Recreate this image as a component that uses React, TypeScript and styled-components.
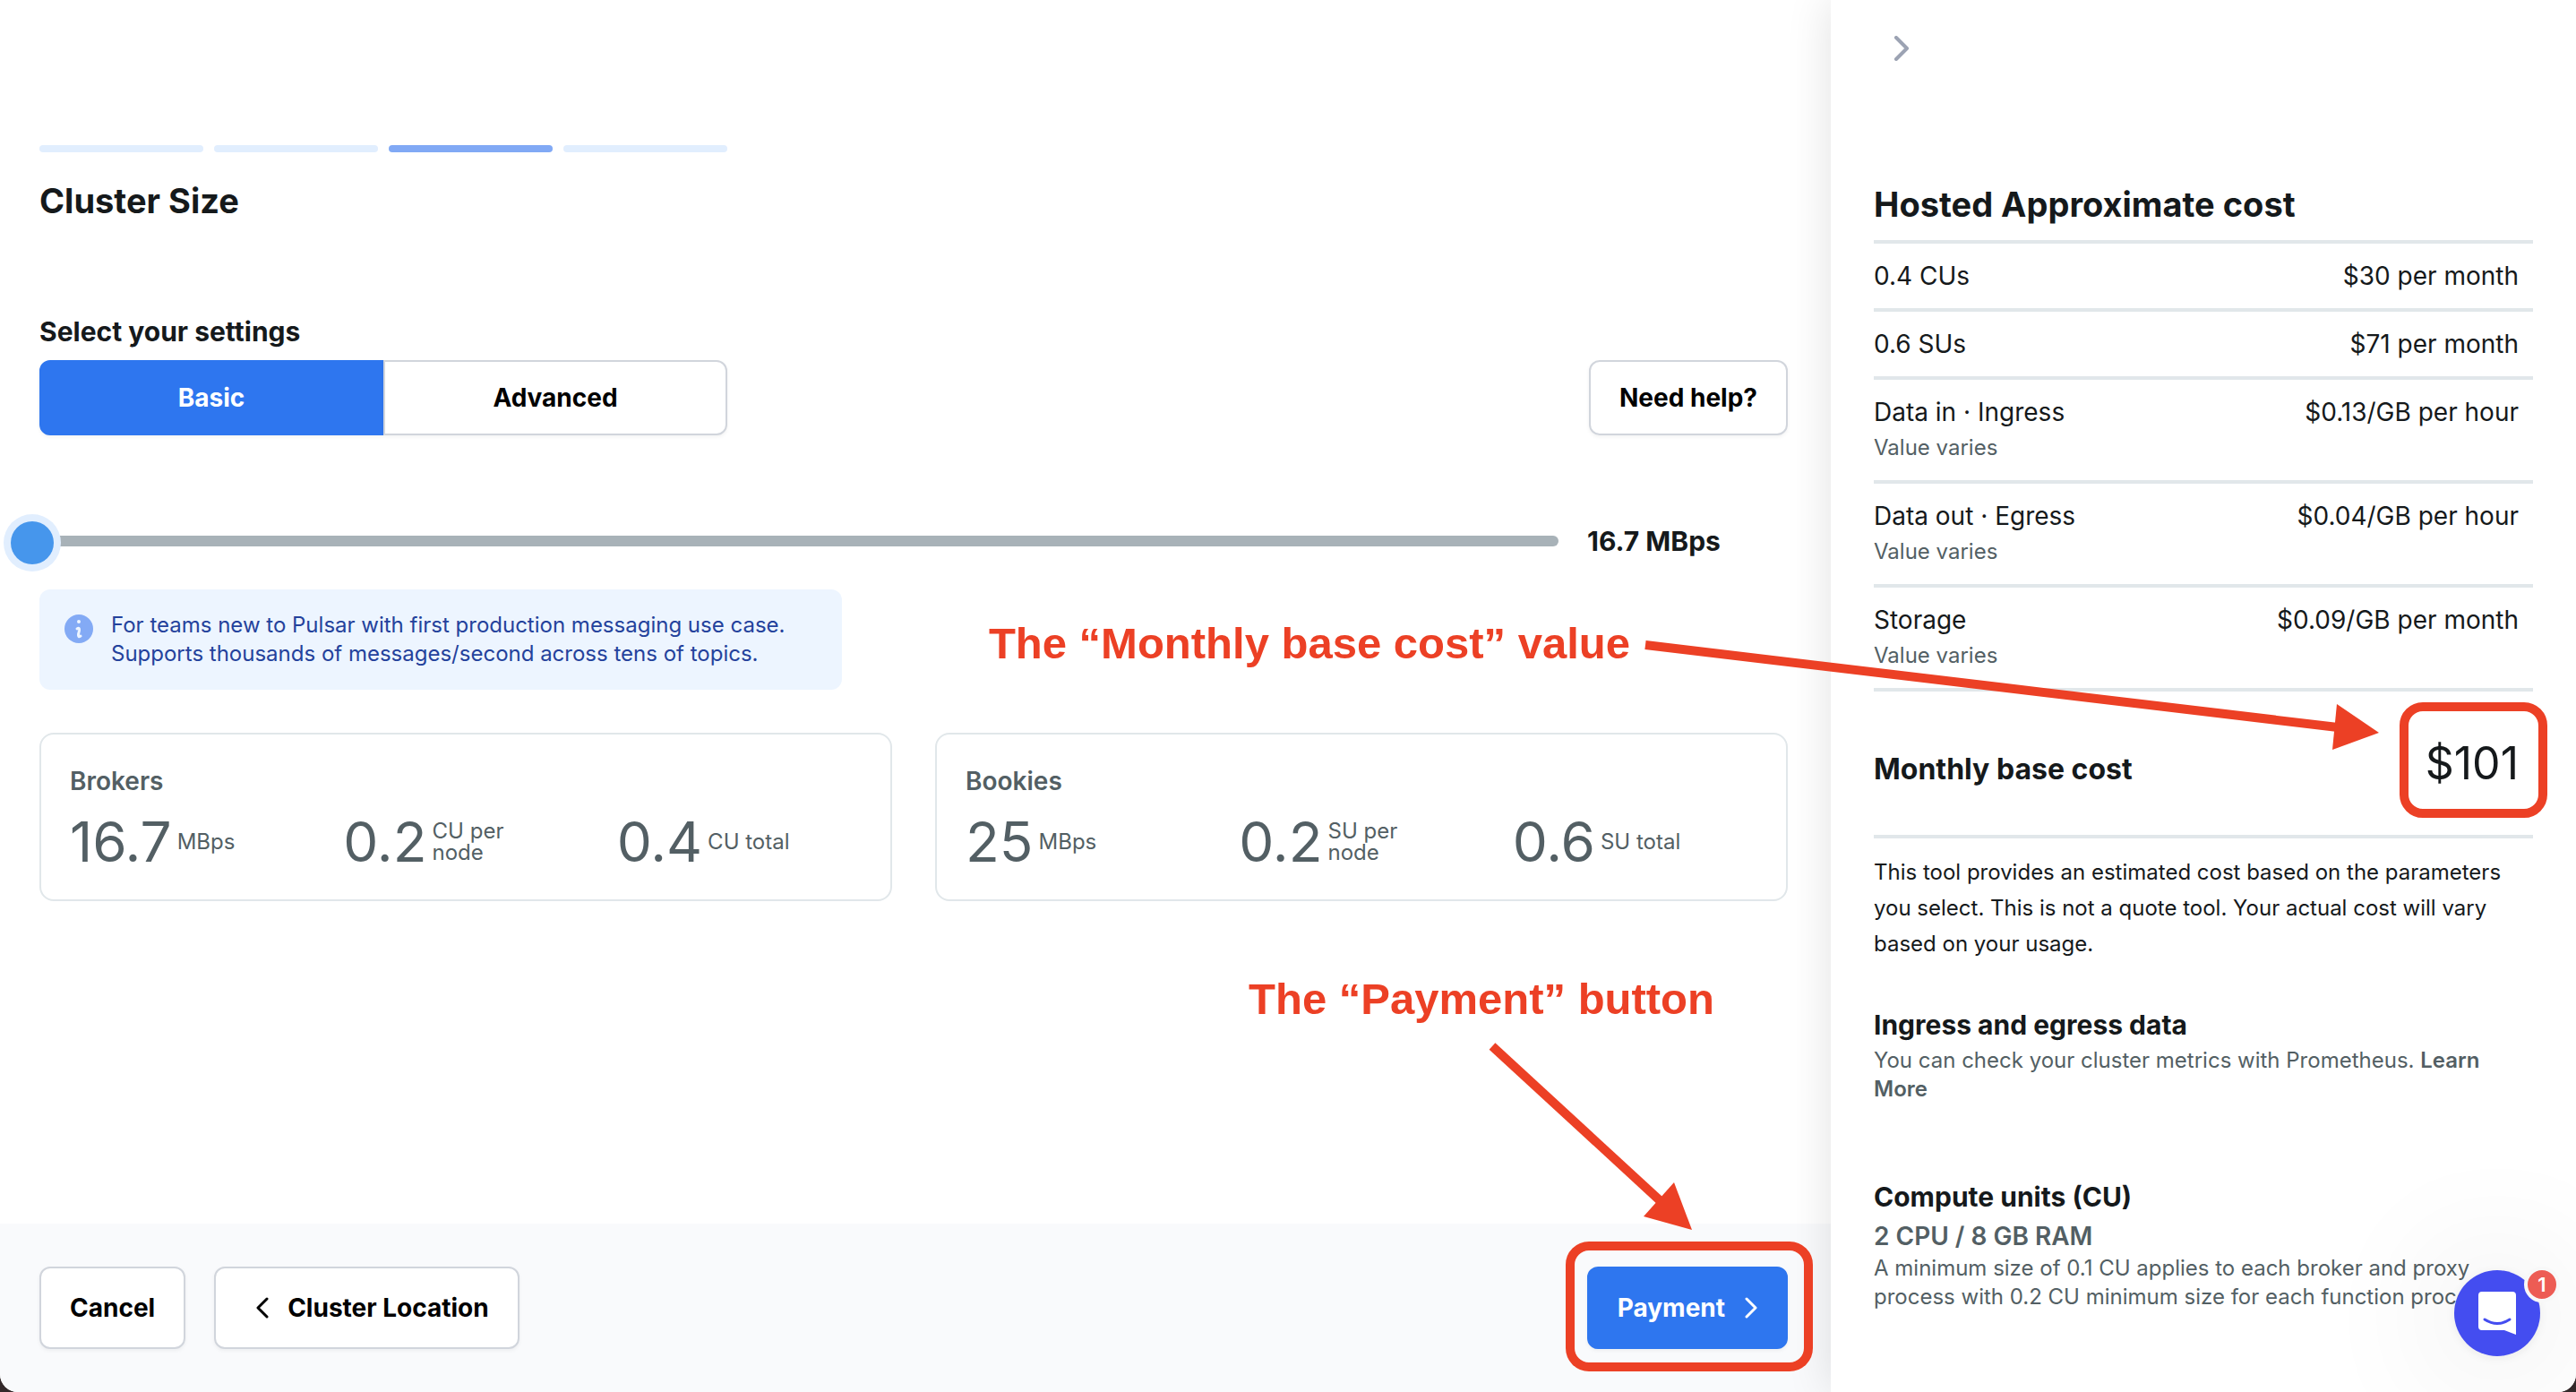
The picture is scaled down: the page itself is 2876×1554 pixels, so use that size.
import { useState } from 'react';
import styled, { createGlobalStyle, css } from 'styled-components';

const ink = '#15191b';
const muted = '#535f64';
const line = '#e1e7ea';
const blue = '#2e76ef';
const red = '#ec4025';

const GlobalStyle = createGlobalStyle`
  *, *::before, *::after { box-sizing: border-box; }
  body { margin: 0; background: #33292a; font-family: Inter, sans-serif; color: ${ink}; -webkit-font-smoothing: antialiased; }
  h1, h2, h3, p { margin: 0; }
`;

const Page = styled.div`
  position: relative;
  display: flex;
  min-height: 100vh;
  background: #fff;
  border-radius: 0 0 20px 20px;
  overflow: hidden;
`;

const Main = styled.main`
  flex: 1;
  display: flex;
  flex-direction: column;
`;

const Content = styled.div`
  flex: 1;
  padding: 162px 48px 0 44px;
`;

const Steps = styled.div`
  display: grid;
  grid-template-columns: repeat(4, 1fr);
  gap: 12px;
  width: 768px;
`;

const Step = styled.span<{ $current?: boolean }>`
  height: 8px;
  border-radius: 4px;
  background: ${(p) => (p.$current ? '#81a9f5' : '#e1eefe')};
`;

const PageTitle = styled.h1`
  font-size: 38px;
  line-height: 48px;
  font-weight: 700;
`;

const MainTitle = styled(PageTitle)`
  margin-top: 30px;
`;

const Subheading = styled.h2`
  font-size: 30px;
  line-height: 40px;
  font-weight: 700;
`;

const SettingsLabel = styled(Subheading)`
  margin-top: 102px;
`;

const Toolbar = styled.div`
  display: flex;
  justify-content: space-between;
  margin-top: 12px;
`;

const Segments = styled.div`
  display: flex;
  width: 768px;
`;

const buttonBase = css`
  font-family: inherit;
  font-size: 28px;
  line-height: 40px;
  font-weight: 700;
  color: #000;
  background: #fff;
  border: 2px solid #d1d5dc;
  border-radius: 12px;
  box-shadow: 0 2px 4px rgba(0, 0, 0, 0.05);
  cursor: pointer;
`;

const Segment = styled.button<{ $active: boolean; $side: 'left' | 'right' }>`
  ${buttonBase}
  flex: 1;
  padding: 20px 32px;
  border-radius: ${(p) => (p.$side === 'left' ? '12px 0 0 12px' : '0 12px 12px 0')};
  ${(p) => p.$active && css`
    color: #fff;
    background: ${blue};
    border-color: ${blue};
  `}
`;

const HelpButton = styled.button`
  ${buttonBase}
  padding: 20px 32px;
`;

const SliderRow = styled.div`
  display: flex;
  align-items: center;
  gap: 32px;
  margin: 98px 0 0 -32px;
`;

const Slider = styled.input`
  appearance: none;
  flex: 1;
  height: 12px;
  margin: 0;
  border-radius: 6px;
  background: #a8b2b8;
  cursor: pointer;
  &::-webkit-slider-thumb {
    appearance: none;
    width: 48px;
    height: 48px;
    margin-top: 4px;
    border-radius: 50%;
    background: #4696ec;
    box-shadow: 0 0 0 8px #e1eefe;
  }
`;

const SliderValue = styled.output`
  width: 224px;
  font-size: 30px;
  line-height: 40px;
  font-weight: 700;
`;

const Notice = styled.div`
  display: flex;
  gap: 20px;
  width: 896px;
  margin-top: 34px;
  padding: 24px 28px;
  border-radius: 12px;
  background: #edf5ff;
  color: #24429c;
  font-size: 24px;
  line-height: 32px;
  svg { flex: none; margin-top: 4px; }
`;

const Cards = styled.div`
  display: grid;
  grid-template-columns: 1fr 1fr;
  gap: 48px;
  margin-top: 48px;
`;

const Card = styled.section`
  padding: 32px 0 32px 32px;
  border: 2px solid ${line};
  border-radius: 16px;
  color: ${muted};
`;

const CardTitle = styled.h3`
  font-size: 28px;
  line-height: 40px;
  font-weight: 600;
`;

const Metrics = styled.div`
  display: grid;
  grid-template-columns: repeat(3, 1fr);
  margin-top: 16px;
`;

const Metric = styled.div`
  display: flex;
  align-items: center;
  gap: 6px;
`;

const MetricValue = styled.span`
  font-size: 62px;
  line-height: 64px;
  font-weight: 400;
`;

const MetricUnit = styled.span`
  max-width: 100px;
  font-size: 24px;
  line-height: 24px;
`;

const Footer = styled.footer`
  display: flex;
  gap: 32px;
  padding: 48px 48px 48px 44px;
  background: #f9fafc;
`;

const FooterButton = styled.button<{ $primary?: boolean }>`
  ${buttonBase}
  display: flex;
  align-items: center;
  gap: 20px;
  padding: 24px 32px;
  ${(p) => p.$primary && css`
    margin-left: auto;
    color: #fff;
    background: ${blue};
    border-color: ${blue};
  `}
`;

const BackIcon = styled.svg`
  margin-left: 12px;
`;

const Aside = styled.aside`
  flex: none;
  width: 832px;
  padding: 32px 48px 48px;
  background: #fff;
  box-shadow: 0 0 48px rgba(0, 0, 0, 0.12);
`;

const CollapseButton = styled.button`
  display: flex;
  padding: 8px 22px;
  border: 0;
  background: none;
  cursor: pointer;
`;

const CostTitle = styled(PageTitle)`
  margin-top: 128px;
`;

const CostTable = styled.table`
  width: 100%;
  margin-top: 16px;
  border-spacing: 0;
  border-top: 4px solid ${line};
  font-size: 28px;
  line-height: 40px;
  th, td { padding: 16px 0; border-bottom: 4px solid ${line}; vertical-align: baseline; font-weight: 400; }
  th { text-align: left; }
  td { text-align: right; padding-right: 16px; }
`;

const Hint = styled.div`
  font-size: 24px;
  color: ${muted};
`;

const TotalRow = styled.tr`
  && th { font-size: 32px; font-weight: 700; }
  && td { padding-top: 40px; padding-bottom: 40px; font-size: 50px; line-height: 80px; }
`;

const Disclaimer = styled.p`
  margin-top: 18px;
  font-size: 24px;
  line-height: 40px;
`;

const Block = styled.section<{ $gap: number }>`
  margin-top: ${(p) => p.$gap}px;
  font-size: 24px;
  line-height: 32px;
  color: ${muted};
  h2 { margin-bottom: 4px; color: ${ink}; }
`;

const Spec = styled.p`
  font-size: 28px;
  line-height: 40px;
  font-weight: 600;
`;

const TextLink = styled.a`
  color: inherit;
  font-weight: 600;
  text-decoration: none;
`;

const ChatButton = styled.button`
  position: absolute;
  right: 40px;
  bottom: 40px;
  display: flex;
  align-items: center;
  justify-content: center;
  width: 96px;
  height: 96px;
  padding: 0;
  border: 0;
  border-radius: 50%;
  background: #444df0;
  box-shadow: 0 2px 12px rgba(0, 0, 0, 0.06), 0 4px 160px rgba(0, 0, 0, 0.16);
  cursor: pointer;
`;

const ChatBadge = styled.span`
  position: absolute;
  top: -4px;
  right: -22px;
  width: 40px;
  height: 40px;
  border: 4px solid #f8f8f8;
  border-radius: 50%;
  background: #ed5c54;
  color: #fff;
  font-family: Inter, sans-serif;
  font-size: 22px;
  font-weight: 600;
  line-height: 32px;
  text-align: center;
`;

const Markup = styled.div`
  position: absolute;
  inset: 0;
  pointer-events: none;
  color: ${red};
`;

const Callout = styled.p<{ $x: number; $y: number }>`
  position: absolute;
  right: ${(p) => p.$x}px;
  top: ${(p) => p.$y}px;
  font-family: 'Liberation Sans', Arial, sans-serif;
  font-size: 49px;
  line-height: 56px;
  font-weight: 700;
  white-space: nowrap;
`;

const Outline = styled.div<{ $x: number; $y: number; $w: number; $h: number }>`
  position: absolute;
  right: ${(p) => p.$x}px;
  top: ${(p) => p.$y}px;
  width: ${(p) => p.$w}px;
  height: ${(p) => p.$h}px;
  border: 10px solid ${red};
  border-radius: 26px;
`;

const Arrows = styled.svg`
  position: absolute;
  top: 0;
  right: 0;
`;

const clusters = [
  { title: 'Brokers', metrics: [['16.7', 'MBps'], ['0.2', 'CU per node'], ['0.4', 'CU total']] },
  { title: 'Bookies', metrics: [['25', 'MBps'], ['0.2', 'SU per node'], ['0.6', 'SU total']] },
];

const costs = [
  { name: '0.4 CUs', price: '$30 per month' },
  { name: '0.6 SUs', price: '$71 per month' },
  { name: 'Data in · Ingress', price: '$0.13/GB per hour', varies: true },
  { name: 'Data out · Egress', price: '$0.04/GB per hour', varies: true },
  { name: 'Storage', price: '$0.09/GB per month', varies: true },
];

export default function App() {
  const [mode, setMode] = useState('basic');
  const [level, setLevel] = useState(0);

  return (
    <Page>
      <GlobalStyle />
      <Main>
        <Content>
          <Steps>
            <Step />
            <Step />
            <Step $current />
            <Step />
          </Steps>
          <MainTitle>Cluster Size</MainTitle>
          <SettingsLabel id="settings">Select your settings</SettingsLabel>
          <Toolbar>
            <Segments role="group" aria-labelledby="settings">
              <Segment type="button" $side="left" $active={mode === 'basic'} onClick={() => setMode('basic')}>Basic</Segment>
              <Segment type="button" $side="right" $active={mode === 'advanced'} onClick={() => setMode('advanced')}>Advanced</Segment>
            </Segments>
            <HelpButton type="button">Need help?</HelpButton>
          </Toolbar>
          <SliderRow>
            <Slider type="range" id="throughput" aria-label="Throughput" min={0} max={10} value={level} onChange={(e) => setLevel(Number(e.target.value))} />
            <SliderValue htmlFor="throughput">16.7 MBps</SliderValue>
          </SliderRow>
          <Notice>
            <svg width="32" height="32" viewBox="0 0 32 32" aria-hidden="true">
              <circle cx="16" cy="16" r="16" fill="#83aaf5" />
              <circle cx="16" cy="8" r="2" fill="#edf5ff" />
              <path d="M14 16 Q17 14 16.5 18 L15.5 22 Q15 26 18 24" fill="none" stroke="#edf5ff" strokeWidth="3" strokeLinecap="round" strokeLinejoin="round" />
            </svg>
            <p>
              For teams new to Pulsar with first production messaging use case.<br />
              Supports thousands of messages/second across tens of topics.
            </p>
          </Notice>
          <Cards>
            {clusters.map((c) => (
              <Card key={c.title}>
                <CardTitle>{c.title}</CardTitle>
                <Metrics>
                  {c.metrics.map(([value, unit]) => (
                    <Metric key={unit}>
                      <MetricValue>{value}</MetricValue>
                      <MetricUnit>{unit}</MetricUnit>
                    </Metric>
                  ))}
                </Metrics>
              </Card>
            ))}
          </Cards>
        </Content>
        <Footer>
          <FooterButton type="button">Cancel</FooterButton>
          <FooterButton type="button">
            <BackIcon width="16" height="24" viewBox="0 0 16 24" fill="none" stroke="#000" strokeWidth="3" strokeLinecap="round" strokeLinejoin="round" aria-hidden="true">
              <path d="M13 2 L3 12 L13 22" />
            </BackIcon>
            Cluster Location
          </FooterButton>
          <FooterButton type="button" $primary>
            Payment
            <svg width="16" height="24" viewBox="0 0 16 24" fill="none" stroke="#fff" strokeWidth="3" strokeLinecap="round" strokeLinejoin="round" aria-hidden="true">
              <path d="M4 2 L14 12 L4 22" />
            </svg>
          </FooterButton>
        </Footer>
      </Main>

      <Aside>
        <CollapseButton type="button" aria-label="Collapse panel">
          <svg width="18" height="28" viewBox="0 0 18 28" fill="none" stroke="#9ca3b3" strokeWidth="4" strokeLinecap="round" strokeLinejoin="round" aria-hidden="true">
            <path d="M3 2 L15 14 L3 26" />
          </svg>
        </CollapseButton>
        <CostTitle as="h2">Hosted Approximate cost</CostTitle>
        <CostTable>
          <tbody>
            {costs.map((c) => (
              <tr key={c.name}>
                <th scope="row">
                  {c.name}
                  {c.varies && <Hint>Value varies</Hint>}
                </th>
                <td>{c.price}</td>
              </tr>
            ))}
            <TotalRow>
              <th scope="row">Monthly base cost</th>
              <td>$101</td>
            </TotalRow>
          </tbody>
        </CostTable>
        <Disclaimer>
          This tool provides an estimated cost based on the parameters you select. This is not a quote tool. Your actual cost will vary based on your usage.
        </Disclaimer>
        <Block $gap={50}>
          <Subheading>Ingress and egress data</Subheading>
          <p>You can check your cluster metrics with Prometheus. <TextLink href="#metrics">Learn More</TextLink></p>
        </Block>
        <Block $gap={84}>
          <Subheading>Compute units (CU)</Subheading>
          <Spec>2 CPU / 8 GB RAM</Spec>
          <p>A minimum size of 0.1 CU applies to each broker and proxy process with 0.2 CU minimum size for each function process.</p>
        </Block>
      </Aside>

      <ChatButton type="button" aria-label="Open chat">
        <svg width="42" height="48" viewBox="0 0 42 48" aria-hidden="true">
          <path d="M4 0 H38 Q42 0 42 4 V48 L29 43 H4 Q0 43 0 39 V4 Q0 0 4 0 Z" fill="#fff" />
          <path d="M7 31 Q21 40 35 31" fill="none" stroke="#444df0" strokeWidth="3" strokeLinecap="round" />
        </svg>
        <ChatBadge>1</ChatBadge>
      </ChatButton>

      <Markup>
        <Callout $x={1056} $y={690}>The “Monthly base cost” value</Callout>
        <Callout $x={962} $y={1087}>The “Payment” button</Callout>
        <Outline $x={32} $y={784} $w={165} $h={129} />
        <Outline $x={852} $y={1386} $w={276} $h={145} />
        <Arrows width="1276" height="1400" viewBox="1600 0 1276 1400" fill={red} stroke={red} aria-hidden="true">
          <path d="M1837 720 L2610 812" strokeWidth="10" fill="none" />
          <path d="M2609 786 L2656 818 L2604 837 Z" stroke="none" />
          <path d="M1666 1168 L1854 1341" strokeWidth="10" fill="none" />
          <path d="M1869 1320 L1889 1373 L1835 1358 Z" stroke="none" />
        </Arrows>
      </Markup>
    </Page>
  );
}
